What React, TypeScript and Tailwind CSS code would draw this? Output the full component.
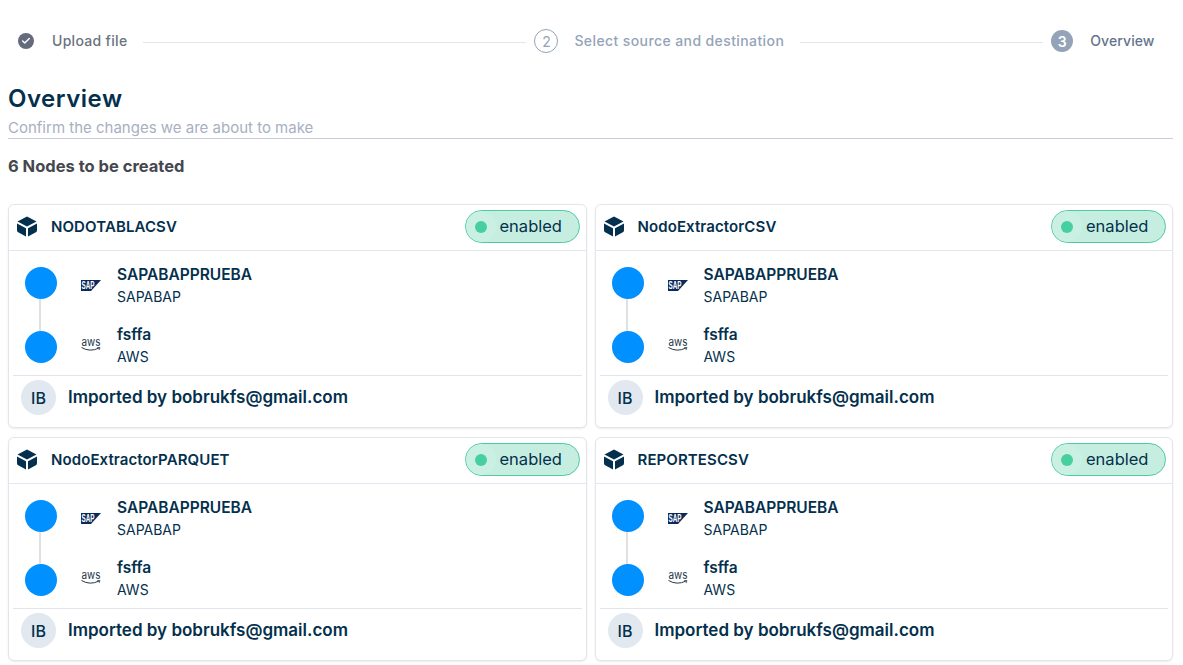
import { Check } from 'lucide-react';

const nodes = ['NODOTABLACSV', 'NodoExtractorCSV', 'NodoExtractorPARQUET', 'REPORTESCSV'];

function CubeIcon() {
  return (
    <svg width="20" height="21" viewBox="0 0 20 21" className="shrink-0">
      <path d="M10 0.5 L19.5 5.6 L10 10.4 L0.5 5.6 Z" fill="#04304d" />
      <path d="M0 7.6 L9 12.2 L9 20.6 L1.6 16.6 Q0 15.8 0 14.2 Z" fill="#04304d" />
      <path d="M20 7.6 L11 12.2 L11 20.6 L18.4 16.6 Q20 15.8 20 14.2 Z" fill="#04304d" />
    </svg>
  );
}

function SapLogo() {
  return (
    <svg width="20" height="11" viewBox="0 0 20 11">
      <polygon points="0,0 20,0 10,11 0,11" fill="#0b2a5c" />
      <text x="0.5" y="9" fontSize="10" fontWeight="700" fill="#fff" fontFamily="Liberation Sans, sans-serif" textLength="13" lengthAdjust="spacingAndGlyphs">
        SAP
      </text>
    </svg>
  );
}

function AwsLogo() {
  return (
    <svg width="20" height="20" viewBox="0 0 20 20">
      <text x="0.5" y="10.5" fontSize="11" fill="#27384a" fontFamily="Inter, sans-serif" textLength="19" lengthAdjust="spacingAndGlyphs">
        aws
      </text>
      <path d="M0.5 12.5 Q9 17.5 18 13" fill="none" stroke="#27384a" strokeWidth="1" />
      <path d="M16.2 12.6 L19 12.6 L18 15" fill="none" stroke="#27384a" strokeWidth="0.8" />
    </svg>
  );
}

function Connection({ title, sub, logo }: { title: string; sub: string; logo: React.ReactNode }) {
  return (
    <div className="flex items-start h-[60px]">
      <div className="w-[20px] h-[46px] mt-[-1px] flex items-center justify-center shrink-0">{logo}</div>
      <div className="ml-[16px]">
        <div className="text-[15.5px] leading-[24px] font-semibold text-[#04304d]">{title}</div>
        <div className="text-[14px] leading-[20px] text-[#04304d]">{sub}</div>
      </div>
    </div>
  );
}

function NodeCard({ name }: { name: string }) {
  return (
    <div className="border border-[#e2e6ec] rounded-[6px] bg-white shadow-[0_1px_2px_rgba(0,0,0,0.08)] h-[224px]">
      <div className="flex items-center justify-between h-[46px] pb-[2px] border-b border-[#e2e8f0] pl-[8px] pr-[6px]">
        <div className="flex items-center gap-[14px]">
          <CubeIcon />
          <span className="pt-[2px] text-[15px] font-semibold tracking-[0.1px] text-[#04304d]">{name}</span>
        </div>
        <div className="flex items-center w-[115px] h-[33px] rounded-full bg-[#c6eee0] border border-[#4ecb9f] overflow-hidden">
          <span className="w-[30px] h-[31px] rounded-full bg-[#c9f0e3] flex items-center justify-center shrink-0">
            <span className="w-[12px] h-[12px] rounded-full bg-[#48cfa0]" />
          </span>
          <span className="ml-[4px] text-[16.5px] text-[#04304d]">enabled</span>
        </div>
      </div>
      <div className="flex h-[124px]">
        <div className="flex flex-col items-center w-[32px] ml-[16px] pt-[16px] shrink-0">
          <div className="w-[32px] h-[32px] rounded-full bg-[#0090ff] shrink-0" />
          <div className="w-[2px] h-[32px] mr-[2px] bg-[#e0e0e0] shrink-0" />
          <div className="w-[32px] h-[32px] rounded-full bg-[#0090ff] shrink-0" />
        </div>
        <div className="ml-[24px] pt-[12px]">
          <Connection title="SAPABAPPRUEBA" sub="SAPABAP" logo={<SapLogo />} />
          <Connection title="fsffa" sub="AWS" logo={<AwsLogo />} />
        </div>
      </div>
      <div className="mx-[4px] border-t border-[#e2e6ec] h-[44px] flex items-center pl-[8px]">
        <div className="w-[35px] h-[35px] rounded-full bg-[#e2e8f0] flex items-center justify-center text-[16px] font-medium text-[#04304d]">
          IB
        </div>
        <span className="ml-[12px] text-[17px] font-semibold text-[#04304d]">Imported by bobrukfs@gmail.com</span>
      </div>
    </div>
  );
}

export default function App() {
  return (
    <div className="w-[1183px] h-[665px] overflow-hidden bg-white font-['Inter',sans-serif] px-[8px]">
      {/* Stepper */}
      <div className="flex items-center h-[22px] mt-[30px] pl-[10px]">
        <div className="w-[16px] h-[16px] rounded-full bg-[#636b7c] flex items-center justify-center">
          <Check className="w-[10px] h-[10px] text-white" strokeWidth={3.5} />
        </div>
        <span className="ml-[18px] pb-[2px] text-[14px] font-medium tracking-[0.3px] text-[#6b7280]">Upload file</span>
        <div className="w-[383px] h-px mt-[2px] bg-[#e2e5ea] ml-[16px] mr-[8px]" />
        <div className="w-[24px] h-[24px] rounded-full border border-[#94a3b8] flex items-center justify-center text-[14px] text-[#94a3b8]">
          2
        </div>
        <span className="ml-[16px] pb-[2px] text-[14px] font-medium tracking-[0.4px] text-[#94a3b8]">Select source and destination</span>
        <div className="w-[243px] h-px mt-[2px] bg-[#e2e5ea] ml-[16px] mr-[8px]" />
        <div className="w-[22px] h-[22px] rounded-full bg-[#94a3b8] flex items-center justify-center text-[14px] font-semibold text-white">
          3
        </div>
        <span className="ml-[17px] pb-[2px] text-[14px] font-medium tracking-[0.1px] text-[#64748b]">Overview</span>
      </div>

      <h1 className="mt-[29px] text-[24px] leading-[36px] font-semibold tracking-[0.5px] text-[#04304d]">Overview</h1>
      <div className="h-[22px] leading-[22px] text-[15px] text-[#a8afc2] border-b border-[#c9ccd6] w-[1165px]">
        Confirm the changes we are about to make
      </div>
      <div className="mt-[16px] text-[16.5px] leading-[22px] font-bold text-[#45474f]">6 Nodes to be created</div>

      <div className="grid grid-cols-2 gap-x-[8px] gap-y-[9px] mt-[27px] w-[1165px]">
        {nodes.map((n) => (
          <NodeCard key={n} name={n} />
        ))}
      </div>
    </div>
  );
}
